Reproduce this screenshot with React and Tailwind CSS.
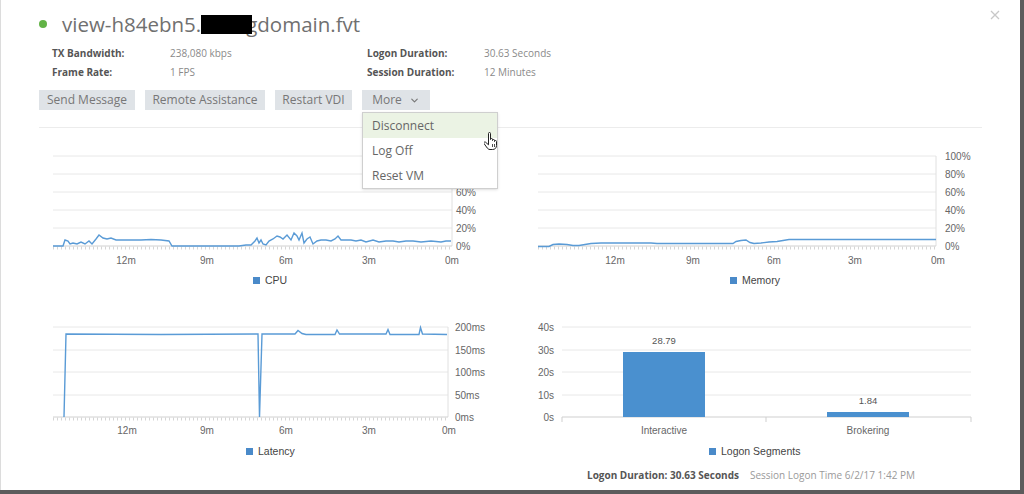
import React from "react";
import { ChevronDown } from "lucide-react";

const cpu = [
  [52,246],[62,246],[64,240],[67,241],[69,244],[72,243],[76,244],[80,242],[84,244],[88,241],[91,244],[95,239],[98,235],[102,238],[106,239],[110,238],[115,240],[120,240],[130,240],[140,240],[150,239.5],[160,240],[168,241],[171,246],[180,246],[200,246],[220,246],[238,246],[245,245],[250,245],[254,241],[256,238],[258,243],[260,240],[262,244],[265,245],[268,241],[272,239],[276,236],[279,237],[282,239],[286,235],[290,240],[293,233],[296,236],[298,240],[301,233],[303,243],[306,239],[309,237],[312,244],[316,241],[320,240],[325,240],[330,241],[334,239],[337,236],[340,240],[345,240],[350,240],[355,241],[360,240],[365,242],[372,240],[378,242],[385,241],[392,241],[398,242],[405,241],[412,241],[420,242],[430,241],[440,242],[445,241],[450,241],
];

const mem = [
  [537,246.5],[548,246.5],[552,244.5],[558,244],[566,244.5],[572,245.5],[578,245.5],[584,244.5],[590,243.5],[600,243],[650,243],[656,243.5],[700,243.5],[732,243.5],[735,241.5],[740,240.5],[745,240],[749,242.5],[753,243.5],[760,243],[768,242],[776,241.5],[782,240.5],[788,239.5],[800,239.5],[935,239.5],
];

const lat = [
  [63,417],[65,334],[160,334.5],[257,334],[258.5,417],[261,334],[294,334],[297,330.5],[301,333.5],[305,334.5],[334,334.5],[336,330],[338.5,334],[385,334],[387,329.5],[389,334.5],[418,334.5],[419.5,327.5],[421.5,334],[446,334.5],
];

const pts = (arr) => arr.map(([x, y]) => `${x},${y}`).join(" ");

const Grid = ({ x1, x2, ys }) =>
  ys.map((y) => <line key={y} x1={x1} x2={x2} y1={y} y2={y} stroke="#e8e8e8" strokeWidth="1" />);

const Baseline = ({ x1, x2, y }) => (
  <g>
    <line x1={x1} x2={x2} y1={y} y2={y} stroke="#d0d0d0" />
    <line x1={x1} x2={x2} y1={y + 2} y2={y + 2} stroke="#d6d6d6" strokeWidth="3" strokeDasharray="1 3" />
  </g>
);

const Legend = ({ x, y, label }) => (
  <g>
    <rect x={x - 3} y={y - 3} width="7" height="7" fill="#4a8ac9" />
    <text x={x + 9} y={y + 4} fontSize="10.5" fill="#444">{label}</text>
  </g>
);

const XLabels = ({ xs, y }) =>
  ["12m", "9m", "6m", "3m", "0m"].map((t, i) => (
    <text key={t} x={xs[i]} y={y + 3.5} fontSize="10" fill="#666" textAnchor="middle">{t}</text>
  ));

const YLabels = ({ x, ys, labels, anchor = "start" }) =>
  labels.map((t, i) => (
    <text key={t} x={x} y={ys[i] + 3.5} fontSize="10" fill="#666" textAnchor={anchor}>{t}</text>
  ));

const pctY = [156, 174, 192, 210, 228, 246];
const pctL = ["100%", "80%", "60%", "40%", "20%", "0%"];
const row2Y = [327, 350, 372, 395, 417];

const CpuChart = () => (
  <svg width="490" height="155" className="font-['Liberation_Sans',Arial,sans-serif]">
    <g transform="translate(-30 -140)">
      <Grid x1={52} x2={451} ys={pctY.slice(0, 5)} />
      <line x1={451} x2={451} y1={156} y2={246} stroke="#e0e0e0" />
      <Baseline x1={52} x2={451} y={246} />
      <polyline points={pts(cpu)} fill="none" stroke="#5a9bd6" strokeWidth="1.4" />
      <YLabels x={455} ys={pctY} labels={pctL} />
      <XLabels xs={[125, 206, 285, 368, 451]} y={260} />
      <Legend x={255} y={280} label="CPU" />
    </g>
  </svg>
);

const MemChart = () => (
  <svg width="490" height="155" className="font-['Liberation_Sans',Arial,sans-serif]">
    <g transform="translate(-520 -140)">
      <Grid x1={537} x2={935} ys={pctY.slice(0, 5)} />
      <line x1={935} x2={935} y1={156} y2={246} stroke="#e0e0e0" />
      <Baseline x1={537} x2={935} y={246} />
      <polyline points={pts(mem)} fill="none" stroke="#5a9bd6" strokeWidth="1.4" />
      <YLabels x={944} ys={pctY} labels={pctL} />
      <XLabels xs={[614, 692, 773, 854, 937]} y={260} />
      <Legend x={732} y={280} label="Memory" />
    </g>
  </svg>
);

const LatencyChart = () => (
  <svg width="490" height="152" className="font-['Liberation_Sans',Arial,sans-serif]">
    <g transform="translate(-30 -310)">
      <Grid x1={52} x2={447} ys={row2Y.slice(0, 4)} />
      <line x1={447} x2={447} y1={327} y2={417} stroke="#e0e0e0" />
      <Baseline x1={52} x2={447} y={417} />
      <polyline points={pts(lat)} fill="none" stroke="#5a9bd6" strokeWidth="1.4" />
      <YLabels x={454} ys={row2Y} labels={["200ms", "150ms", "100ms", "50ms", "0ms"]} />
      <XLabels xs={[126, 206, 285, 368, 448]} y={430} />
      <Legend x={248} y={451} label="Latency" />
    </g>
  </svg>
);

const LogonChart = () => (
  <svg width="490" height="152" className="font-['Liberation_Sans',Arial,sans-serif]">
    <g transform="translate(-520 -310)">
      <Grid x1={561} x2={970} ys={row2Y.slice(0, 4)} />
      <line x1={561} x2={970} y1={417} y2={417} stroke="#cfcfcf" />
      {[561, 765, 970].map((x) => (
        <line key={x} x1={x} x2={x} y1={417} y2={422} stroke="#cfcfcf" />
      ))}
      <YLabels x={553} ys={row2Y} labels={["40s", "30s", "20s", "10s", "0s"]} anchor="end" />
      <rect x={622} y={352} width={82} height={65} fill="#4a90cf" />
      <rect x={826} y={412} width={82} height={5} fill="#4a90cf" />
      <text x={663} y={344} fontSize="9.5" fill="#555" textAnchor="middle">28.79</text>
      <text x={867} y={404} fontSize="9.5" fill="#555" textAnchor="middle">1.84</text>
      <text x={663} y={433.5} fontSize="10" fill="#666" textAnchor="middle">Interactive</text>
      <text x={867} y={433.5} fontSize="10" fill="#666" textAnchor="middle">Brokering</text>
      <Legend x={711} y={451} label="Logon Segments" />
    </g>
  </svg>
);

const HandCursor = () => (
  <svg width="16" height="19" viewBox="0 0 16 19">
    <path
      d="M4.5 1.5a1 1 0 0 1 2 0v6a1 1 0 0 1 2 0v1a1 1 0 0 1 2 0v1a1 1 0 0 1 2 0v4c0 2.5-1.5 4-4 4h-2.5c-1.5 0-2.5-1-3.5-2.5l-2.5-3.5a1 1 0 0 1 1.7-1.2l2.8 2.5z"
      fill="#fff"
      stroke="#222"
      strokeWidth="1"
      strokeLinejoin="round"
    />
    <path d="M8.5 12v3M10.5 12v3" stroke="#222" strokeWidth="0.8" />
  </svg>
);

const Btn = ({ w, children }) => (
  <button className={`${w} h-[20px] bg-[#dfe3e7] text-[12px] text-[#777] flex items-center justify-center leading-none`}>
    {children}
  </button>
);

const App = () => {
  return (
    <div className="w-[1024px] h-[494px] bg-[#5c5c5c] font-['Open_Sans',sans-serif]">
      <div className="w-[1020px] h-[490px] bg-white border-l border-[#dcdcdc] pt-[8px]">
        {/* header */}
        <div className="h-[32px] flex items-center pl-[38px]">
          <span className="w-[8px] h-[8px] rounded-full bg-[#62b346]" />
          <h1 className="ml-[15px] text-[20.5px] text-[#707070] flex items-center">
            view-h84ebn5.
            <span className="relative z-10 inline-block w-[51px] h-[19px] bg-black -mr-[6px]" />
            gdomain.fvt
          </h1>
          <svg className="ml-auto mr-[20px] self-start mt-[2px]" width="10" height="10" viewBox="0 0 10 10">
            <path d="M1 1l8 8M9 1l-8 8" stroke="#c8c8c8" strokeWidth="1.3" />
          </svg>
        </div>

        {/* info */}
        <div className="mt-[4px] pl-[51px] grid grid-cols-[118px_197px_117px_auto] auto-rows-[19px] items-center text-[10px]">
          <span className="font-bold text-[#555]">TX Bandwidth:</span>
          <span className="text-[#8a8a8a]">238,080 kbps</span>
          <span className="font-bold text-[#555]">Logon Duration:</span>
          <span className="text-[#8a8a8a]">30.63 Seconds</span>
          <span className="font-bold text-[#555]">Frame Rate:</span>
          <span className="text-[#8a8a8a]">1 FPS</span>
          <span className="font-bold text-[#555]">Session Duration:</span>
          <span className="text-[#8a8a8a]">12 Minutes</span>
        </div>

        {/* actions */}
        <div className="mt-[8px] pl-[38px] flex gap-[10px]">
          <Btn w="w-[96px]">Send Message</Btn>
          <Btn w="w-[120px]">Remote Assistance</Btn>
          <Btn w="w-[77px]">Restart VDI</Btn>
          <div className="relative">
            <Btn w="w-[68px]">
              More
              <ChevronDown size={11} strokeWidth={2.5} className="ml-[7px] text-[#777]" />
            </Btn>
            <div className="absolute top-[22px] left-0 z-20 w-[136px] bg-white border border-[#cfcfcf] shadow-sm text-[12px] text-[#666]">
              <div className="h-[25px] pl-[9px] flex items-center bg-[#ebf3e4]">Disconnect</div>
              <div className="h-[25px] pl-[9px] flex items-center">Log Off</div>
              <div className="h-[25px] pl-[9px] flex items-center">Reset VM</div>
              <div className="absolute left-[121px] top-[19px]">
                <HandCursor />
              </div>
            </div>
          </div>
        </div>

        <div className="mt-[17px] mx-[38px] border-t border-[#ececec]" />

        {/* charts */}
        <div className="mt-[12px] pl-[30px] flex flex-col gap-[15px]">
          <div className="flex">
            <CpuChart />
            <MemChart />
          </div>
          <div className="flex">
            <LatencyChart />
            <LogonChart />
          </div>
        </div>

        <div className="mt-[6px] pl-[586px] h-[14px] flex items-center text-[10px]">
          <span className="font-bold text-[#555]">Logon Duration: 30.63 Seconds</span>
          <span className="ml-[11px] text-[#9a9a9a]">Session Logon Time 6/2/17 1:42 PM</span>
        </div>
      </div>
    </div>
  );
};

export default App;
